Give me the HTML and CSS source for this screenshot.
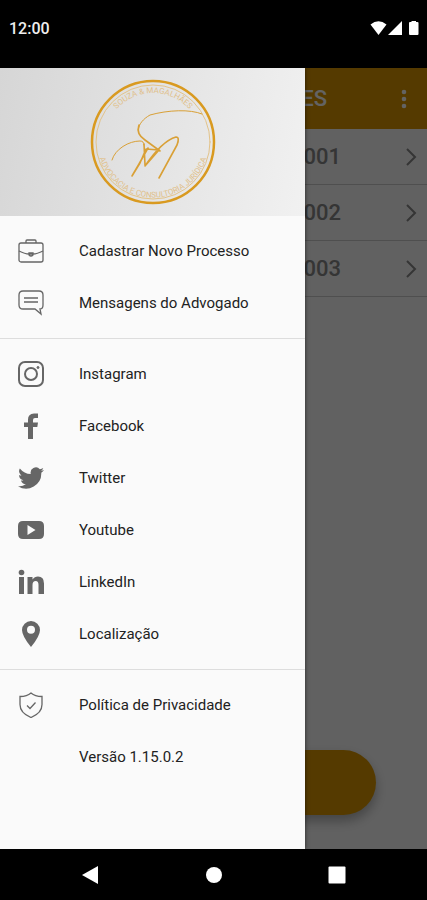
FILE: index.html
```html
<!DOCTYPE html>
<html lang="pt-BR">
<head>
    <meta charset="UTF-8">
    <meta name="viewport" content="width=device-width, initial-scale=1">
    <title>Menu</title>
    <link rel="stylesheet" href="styles.css">
</head>
<body>
<div class="status">
    <span class="clock">12:00</span>
    <svg class="signals" width="50" height="16" viewBox="0 0 50 16">
        <path d="M0.500 4.500Q8.500-2 16.500 4.500L8.500 15z"/>
        <path d="M18 15L32 1V15z"/>
        <path d="M39 3q0-1 1-1h1.500V1h4.500v1h1.500q1 0 1 1v11q0 1-1 1h-7.500q-1 0-1-1z"/>
    </svg>
</div>

<div class="screen">
    <main class="page">
        <header class="topbar">
            <h1>ES</h1>
            <button type="button" class="more" aria-label="Mais">
                <svg width="6" height="20" viewBox="0 0 6 20"><circle cx="3" cy="3" r="2.300"/><circle cx="3" cy="10" r="2.300"/><circle cx="3" cy="17" r="2.300"/></svg>
            </button>
        </header>
        <ul class="list">
            <li><a href="#"><span>001</span><svg width="12" height="18" viewBox="0 0 12 18"><path d="M2 1l8 8-8 8"/></svg></a></li>
            <li><a href="#"><span>002</span><svg width="12" height="18" viewBox="0 0 12 18"><path d="M2 1l8 8-8 8"/></svg></a></li>
            <li><a href="#"><span>003</span><svg width="12" height="18" viewBox="0 0 12 18"><path d="M2 1l8 8-8 8"/></svg></a></li>
        </ul>
        <button type="button" class="action" aria-label="Novo"></button>
    </main>

    <div class="scrim"></div>

    <aside class="drawer">
        <div class="brand">
            <svg class="logo" width="126" height="126" viewBox="0 0 126 126">
                <defs>
                    <path id="arc-top" d="M14 63a49 49 0 0 1 98 0"/>
                    <path id="arc-bottom" d="M8 52a56 56 0 1 0 110 0"/>
                </defs>
                <circle class="ring" cx="63" cy="63" r="61"/>
                <circle class="ring-thin" cx="63" cy="63" r="57"/>
                <text class="logo-name"><textPath href="#arc-top" startOffset="50%">SOUZA &amp; MAGALHÃES</textPath></text>
                <text class="logo-sub"><textPath href="#arc-bottom" startOffset="50%">ADVOCACIA E CONSULTORIA JURÍDICA</textPath></text>
                <path class="sign-thin" d="M112 35C100 30 78 31 60 36C53 40 49 45 48 51"/>
                <path class="sign" d="M49 46C47 53 49 57 55 61L70 72"/>
                <path class="sign-thin" d="M22 81C25 70 39 62 50 62Q54 62 54 66"/>
                <path class="sign" d="M54 65L55 86M58 69L49 85L42 97L50 84L56 70L69 71L55 87Q72 62 86 58Q90 58 87 66L69 99"/>
            </svg>
        </div>
        <ul class="menu">
            <li><a href="#">
                <svg class="icon line" viewBox="0 0 26 26"><rect x="1" y="5" width="24" height="19" rx="2"/><path d="M8 5V3q0-1 1-1h8q1 0 1 1v2M1 13q6 3 10 3h4q4 0 10-3M11 15h4v2q-2 2-4 0z"/></svg>
                <span>Cadastrar Novo Processo</span></a></li>
            <li><a href="#">
                <svg class="icon line" viewBox="0 0 26 26"><path d="M5 1h16q4 0 4 4v10q0 4-3 4l1 5-6-5H5q-4 0-4-4V5q0-4 4-4zM6 8h14M6 12h14"/></svg>
                <span>Mensagens do Advogado</span></a></li>
        </ul>
        <ul class="menu">
            <li><a href="#">
                <svg class="icon line bold" viewBox="0 0 26 26"><rect x="1" y="1" width="24" height="24" rx="6"/><circle cx="13" cy="13" r="6"/><circle class="dot" cx="20" cy="6.500" r="1"/></svg>
                <span>Instagram</span></a></li>
            <li><a href="#">
                <svg class="icon" viewBox="0 0 26 26"><path d="M10 26V14H6V9.500h4V6.500Q10 1 16 .5h4V5h-3q-2 0-2 2v2.500h5L19.300 14H15v12z"/></svg>
                <span>Facebook</span></a></li>
            <li><a href="#">
                <svg class="icon" viewBox="0 0 24 24"><path d="M24 4.600a10 10 0 0 1-2.800.8 5 5 0 0 0 2.100-2.700 10 10 0 0 1-3.100 1.200A4.900 4.900 0 0 0 11.800 8.400 14 14 0 0 1 1.700 3.200a4.900 4.900 0 0 0 1.500 6.600 5 5 0 0 1-2.200-.6v.1a4.900 4.900 0 0 0 4 4.800 5 5 0 0 1-2.300.1 4.900 4.900 0 0 0 4.600 3.400A9.900 9.900 0 0 1 0 19.500 14 14 0 0 0 21.500 7.100 10 10 0 0 0 24 4.600z"/></svg>
                <span>Twitter</span></a></li>
            <li><a href="#">
                <svg class="icon" viewBox="0 0 26 26"><path fill-rule="evenodd" d="M5 4h16q5 0 5 5v8q0 5-5 5H5q-5 0-5-5V9q0-5 5-5zM9.500 8v10l8-5z"/></svg>
                <span>Youtube</span></a></li>
            <li><a href="#">
                <svg class="icon" viewBox="0 0 26 26"><circle cx="3.500" cy="3.500" r="2.800"/><path d="M1 8h5v17H1zM9.500 8h5v2.500q2-3 5.500-3 6 0 6 7V25h-5.500v-9q0-4-2.700-4-3.300 0-3.300 4v9h-5z"/></svg>
                <span>LinkedIn</span></a></li>
            <li><a href="#">
                <svg class="icon" viewBox="0 0 26 26"><path fill-rule="evenodd" d="M13 0a9 9 0 0 1 9 9q0 6-9 17Q4 15 4 9a9 9 0 0 1 9-9zM13 4.800a4 4 0 1 0 0 8 4 4 0 0 0 0-8z"/></svg>
                <span>Localização</span></a></li>
        </ul>
        <ul class="menu">
            <li><a href="#">
                <svg class="icon line" viewBox="0 0 26 26"><path d="M13 1Q17 4.500 24 4.500v8Q24 21 13 25.500 2 21 2 12.500v-8Q9 4.500 13 1zM9 13.500l3 3 5.500-6"/></svg>
                <span>Política de Privacidade</span></a></li>
            <li class="version">Versão 1.15.0.2</li>
        </ul>
    </aside>
</div>

<nav class="navbar">
    <button type="button" aria-label="Voltar"><svg width="18" height="20" viewBox="0 0 18 20"><path d="M17 1v18L1 10z"/></svg></button>
    <button type="button" aria-label="Início"><svg width="18" height="18" viewBox="0 0 18 18"><circle cx="9" cy="9" r="8"/></svg></button>
    <button type="button" aria-label="Recentes"><svg width="18" height="18" viewBox="0 0 18 18"><rect x="0.500" y="0.500" width="17" height="17" rx="1"/></svg></button>
</nav>
</body>
</html>
```
FILE: styles.css
```css
* {
    box-sizing: border-box;
}

body {
    margin: 0;
    min-height: 100vh;
    display: flex;
    flex-direction: column;
    background: #000;
    color: #222;
    font-family: Roboto, "Liberation Sans", sans-serif;
    font-size: 15px;
}

ul {
    margin: 0;
    padding: 0;
    list-style: none;
}

a {
    color: inherit;
    text-decoration: none;
}

button {
    padding: 0;
    border: 0;
    background: none;
}

svg {
    display: block;
}

/* status bar */
.status {
    height: 68px;
    padding: 0 7px 12px 9px;
    display: flex;
    align-items: center;
    justify-content: space-between;
    color: #eee;
}

.clock {
    font-size: 16px;
    font-weight: 500;
}

.signals {
    fill: #fff;
}

/* page behind the drawer */
.screen {
    flex: 1;
    display: flex;
    position: relative;
    overflow: hidden;
}

.page {
    flex: 1;
    display: flex;
    flex-direction: column;
    background: #fafafa;
}

.topbar {
    height: 61px;
    padding-right: 20px;
    display: flex;
    align-items: center;
    gap: 74px;
    background: #da9700;
    color: #fff;
}

.topbar h1 {
    flex: 1;
    margin: 0;
    text-align: right;
    font-size: 22px;
    font-weight: 500;
}

.more svg {
    fill: #fff;
}

.list a {
    height: 56px;
    padding-right: 10px;
    display: flex;
    align-items: center;
    justify-content: flex-end;
    gap: 64px;
    border-bottom: 1px solid #ccc;
    color: #888;
    font-size: 22px;
    font-weight: 500;
}

.list svg {
    fill: none;
    stroke: #888;
    stroke-width: 2;
}

.action {
    width: 76%;
    height: 65px;
    margin: auto auto 34px;
    border-radius: 33px;
    background: #da9700;
    box-shadow: 0 6px 12px rgba(0, 0, 0, 0.3);
}

.scrim {
    position: absolute;
    inset: 0;
    background: rgba(0, 0, 0, 0.61);
}

/* drawer */
.drawer {
    position: absolute;
    top: 0;
    bottom: 0;
    left: 0;
    width: 305px;
    max-width: 85%;
    background: #fafafa;
    box-shadow: 0 0 4px rgba(0, 0, 0, 0.6);
}

.brand {
    height: 148px;
    display: flex;
    align-items: center;
    justify-content: center;
    background: linear-gradient(100deg, #d6d6d6, #f1f1f1);
}

.menu {
    padding: 9px 0;
}

.menu + .menu {
    border-top: 1px solid #ddd;
}

.menu a,
.version {
    height: 52px;
    padding-left: 18px;
    display: flex;
    align-items: center;
    gap: 35px;
}

.version {
    padding-left: 79px;
}

.icon {
    width: 26px;
    height: 26px;
    fill: #666;
}

.line {
    fill: none;
    stroke: #666;
    stroke-width: 1.3;
}

.bold {
    stroke-width: 2;
}

.dot {
    fill: #666;
    stroke-width: 1;
}

/* round logo */
.ring,
.ring-thin,
.sign,
.sign-thin {
    fill: none;
    stroke: #d9a036;
    stroke-linecap: round;
    stroke-linejoin: round;
}

.ring {
    stroke: #d99a20;
    stroke-width: 2.5;
}

.ring-thin {
    stroke: #e3c389;
    stroke-width: 1;
}

.sign {
    stroke-width: 1.6;
}

.sign-thin {
    stroke-width: 1;
}

.logo text {
    fill: #e0c08a;
    font-size: 8px;
    text-anchor: middle;
}

/* system navigation */
.navbar {
    height: 51px;
    padding: 0 81px;
    display: flex;
    align-items: center;
    justify-content: space-between;
}

.navbar svg {
    fill: #fff;
}
```
